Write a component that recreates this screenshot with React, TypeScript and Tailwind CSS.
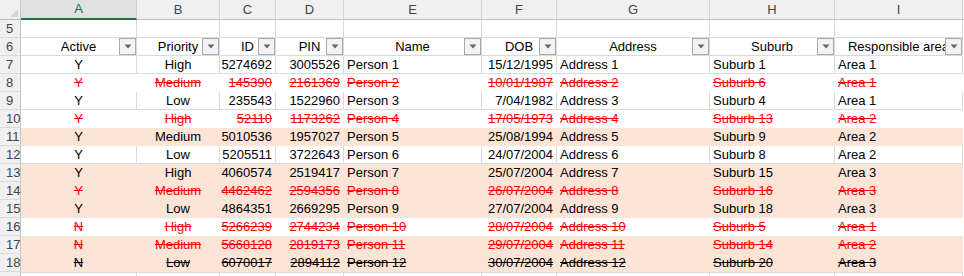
import React from 'react';

type Fill = 'none' | 'white' | 'peach';
type Tone = 'normal' | 'red' | 'strike';

const columns = [
  { letter: 'A', head: 'Active', w: 'w-[116px]', align: 'justify-center' },
  { letter: 'B', head: 'Priority', w: 'w-[83px]', align: 'justify-center' },
  { letter: 'C', head: 'ID', w: 'w-[56px]', align: 'justify-end' },
  { letter: 'D', head: 'PIN', w: 'w-[68px]', align: 'justify-end' },
  { letter: 'E', head: 'Name', w: 'w-[138px]', align: 'justify-start' },
  { letter: 'F', head: 'DOB', w: 'w-[75px]', align: 'justify-end' },
  { letter: 'G', head: 'Address', w: 'w-[153px]', align: 'justify-start' },
  { letter: 'H', head: 'Suburb', w: 'w-[125px]', align: 'justify-start' },
  { letter: 'I', head: 'Responsible area', w: 'w-[128px]', align: 'justify-start' },
];

const rows: { n: number; fill: Fill; tone: Tone; v: string[] }[] = [
  { n: 7, fill: 'none', tone: 'normal', v: ['Y', 'High', '5274692', '3005526', 'Person 1', '15/12/1995', 'Address 1', 'Suburb 1', 'Area 1'] },
  { n: 8, fill: 'white', tone: 'red', v: ['Y', 'Medium', '145390', '2161369', 'Person 2', '10/01/1987', 'Address 2', 'Suburb 6', 'Area 1'] },
  { n: 9, fill: 'none', tone: 'normal', v: ['Y', 'Low', '235543', '1522960', 'Person 3', '7/04/1982', 'Address 3', 'Suburb 4', 'Area 1'] },
  { n: 10, fill: 'white', tone: 'red', v: ['Y', 'High', '52110', '1173262', 'Person 4', '17/05/1973', 'Address 4', 'Suburb 13', 'Area 2'] },
  { n: 11, fill: 'peach', tone: 'normal', v: ['Y', 'Medium', '5010536', '1957027', 'Person 5', '25/08/1994', 'Address 5', 'Suburb 9', 'Area 2'] },
  { n: 12, fill: 'none', tone: 'normal', v: ['Y', 'Low', '5205511', '3722643', 'Person 6', '24/07/2004', 'Address 6', 'Suburb 8', 'Area 2'] },
  { n: 13, fill: 'peach', tone: 'normal', v: ['Y', 'High', '4060574', '2519417', 'Person 7', '25/07/2004', 'Address 7', 'Suburb 15', 'Area 3'] },
  { n: 14, fill: 'peach', tone: 'red', v: ['Y', 'Medium', '4462462', '2594356', 'Person 8', '26/07/2004', 'Address 8', 'Suburb 16', 'Area 3'] },
  { n: 15, fill: 'peach', tone: 'normal', v: ['Y', 'Low', '4864351', '2669295', 'Person 9', '27/07/2004', 'Address 9', 'Suburb 18', 'Area 3'] },
  { n: 16, fill: 'white', tone: 'red', v: ['N', 'High', '5266239', '2744234', 'Person 10', '28/07/2004', 'Address 10', 'Suburb 5', 'Area 1'] },
  { n: 17, fill: 'peach', tone: 'red', v: ['N', 'Medium', '5668128', '2819173', 'Person 11', '29/07/2004', 'Address 11', 'Suburb 14', 'Area 2'] },
  { n: 18, fill: 'peach', tone: 'strike', v: ['N', 'Low', '6070017', '2894112', 'Person 12', '30/07/2004', 'Address 12', 'Suburb 20', 'Area 3'] },
];

const fillClass: Record<Fill, string> = {
  none: 'bg-white border-[#dadada]',
  white: 'bg-white border-white',
  peach: 'bg-[#fce4d6] border-[#fce4d6]',
};

const toneClass: Record<Tone, string> = {
  normal: 'text-black',
  red: 'text-[#ff0000] line-through',
  strike: 'text-black line-through',
};

const RowHead = ({ n }: { n?: number }) => (
  <div className="w-[21px] h-[18px] shrink-0 flex items-center pl-[6px] bg-[#f0f0f0] border-r border-b border-r-[#c4c4c4] border-b-[#dadada] text-[13px] text-[#444]">
    {n}
  </div>
);

const FilterButton = () => (
  <div className="absolute right-0 top-0 w-[17px] h-[17px] flex items-center justify-center border border-[#a9a9a9] bg-[#f3f3f3]">
    <svg width="8" height="5" viewBox="0 0 8 5">
      <path d="M0.5 0.5 L7.5 0.5 L4 4.5 Z" fill="#666" />
    </svg>
  </div>
);

export default function App() {
  return (
    <div className="w-[964px] h-[276px] overflow-hidden bg-white" style={{ fontFamily: '"Liberation Sans", Arial, sans-serif' }}>
      {/* column letters */}
      <div className="flex h-[20px]">
        <div className="w-[21px] shrink-0 bg-[#f0f0f0] border-r border-b border-r-[#c4c4c4] border-b-[#bdbdbd] flex items-end justify-end pr-[2px] pb-[2px]">
          <svg width="8" height="8" viewBox="0 0 8 8">
            <path d="M8 0 L8 8 L0 8 Z" fill="#d5d5d5" />
          </svg>
        </div>
        {columns.map((c) =>
          c.letter === 'A' ? (
            <div key={c.letter} className={`${c.w} shrink-0 flex items-center justify-center bg-[#e1e1e1] border-r border-r-[#d0d0d0] border-b-2 border-b-[#217346] text-[13px] text-[#217346]`}>
              {c.letter}
            </div>
          ) : (
            <div key={c.letter} className={`${c.w} shrink-0 flex items-center justify-center bg-[#f0f0f0] border-r border-r-[#d4d4d4] border-b border-b-[#bdbdbd] text-[13px] text-[#444]`}>
              {c.letter}
            </div>
          )
        )}
        <div className="flex-1 bg-[#f0f0f0] border-b border-b-[#bdbdbd]" />
      </div>

      {/* row 5 */}
      <div className="flex">
        <RowHead n={5} />
        {columns.map((c) => (
          <div key={c.letter} className={`${c.w} h-[18px] shrink-0 border-r border-b border-[#dadada]`} />
        ))}
      </div>

      {/* row 6: table headers */}
      <div className="flex">
        <RowHead n={6} />
        {columns.map((c) => (
          <div key={c.letter} className={`${c.w} h-[18px] shrink-0 relative flex items-center justify-center border-r border-b border-[#dadada] text-[13px] text-black whitespace-nowrap overflow-hidden`}>
            {c.head}
            <FilterButton />
          </div>
        ))}
      </div>

      {/* data rows */}
      {rows.map((r) => (
        <div key={r.n} className="flex">
          <RowHead n={r.n} />
          {columns.map((c, i) => (
            <div
              key={c.letter}
              className={`${c.w} h-[18px] shrink-0 flex items-center px-[3px] border-r border-b ${fillClass[r.fill]} ${c.align} whitespace-nowrap overflow-hidden text-[13px]`}
            >
              <span className={toneClass[r.tone]}>{r.v[i]}</span>
            </div>
          ))}
        </div>
      ))}

      {/* top edge of row 19 */}
      <div className="flex">
        <RowHead />
        {columns.map((c) => (
          <div key={c.letter} className={`${c.w} h-[18px] shrink-0 border-r border-t border-[#dadada]`} />
        ))}
      </div>
    </div>
  );
}
